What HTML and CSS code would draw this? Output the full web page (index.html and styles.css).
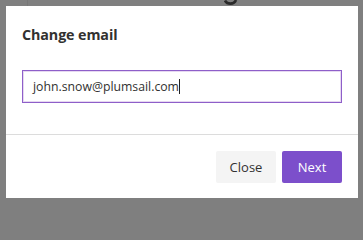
FILE: index.html
```html
<!DOCTYPE html>
<html lang="en">
<head>
<meta charset="utf-8">
<title>Change email</title>
<link rel="stylesheet" href="styles.css">
</head>
<body>
<div class="backdrop">
  <div class="page-rule"></div>
  <svg class="page-glyph" width="14" height="6" viewBox="0 0 14 6"><path d="M1 0.5 C3 4.5 10 5 12 0" fill="none" stroke="#2a2a2a" stroke-width="2.6"/></svg>
  <div class="dialog">
    <div class="dialog-body">
      <h2 class="dialog-title">Change email</h2>
      <div class="field"><span class="field-text">john.snow@plumsail.com</span><span class="caret"></span></div>
    </div>
    <div class="dialog-footer">
      <button class="btn btn-secondary">Close</button>
      <button class="btn btn-primary">Next</button>
    </div>
  </div>
</div>
</body>
</html>
```
FILE: styles.css
```css
html, body {
  margin: 0;
  padding: 0;
  background: #7f7f7f;
}
body {
  width: 363px;
  height: 203px;
  overflow: hidden;
  font-family: "Open Sans", "Noto Sans", sans-serif;
  color: #323130;
}
.backdrop {
  position: relative;
  width: 363px;
  height: 203px;
  background: #7f7f7f;
  padding: 6px 5px 5px 6px;
  box-sizing: border-box;
}
.page-rule {
  position: absolute;
  left: 27px;
  top: 0;
  width: 1px;
  height: 6px;
  background: #777;
}
.page-glyph {
  position: absolute;
  left: 224px;
  top: 0;
}
.dialog {
  background: #fff;
  width: 352px;
  height: 192px;
  display: flex;
  flex-direction: column;
}
.dialog-body {
  padding: 18px 16px 0 16px;
  flex: 1;
}
.dialog-title {
  margin: 0;
  font-size: 14.3px;
  font-weight: 700;
  line-height: 22px;
  color: #323130;
  letter-spacing: -0.1px;
}
.field {
  margin-top: 24px;
  height: 33px;
  box-sizing: border-box;
  border: 1px solid #8e5fc9;
  box-shadow: inset 0 0 0 1px #e6d8f1;
  display: flex;
  align-items: center;
  padding-left: 10px;
  font-size: 12.25px;
  color: #323130;
}
.caret {
  display: inline-block;
  width: 1px;
  height: 15px;
  background: #222;
}
.dialog-footer {
  border-top: 1px solid #dcdcdc;
  padding: 16px 16px 15px 16px;
  display: flex;
  justify-content: flex-end;
  gap: 6px;
}
.btn {
  width: 60px;
  height: 32px;
  border: none;
  border-radius: 2px;
  font-family: "Open Sans", "Noto Sans", sans-serif;
  font-size: 13px;
  padding: 0;
}
.btn-secondary {
  background: #f4f4f4;
  color: #323130;
}
.btn-primary {
  background: #7c4fcb;
  color: #fff;
}
```
